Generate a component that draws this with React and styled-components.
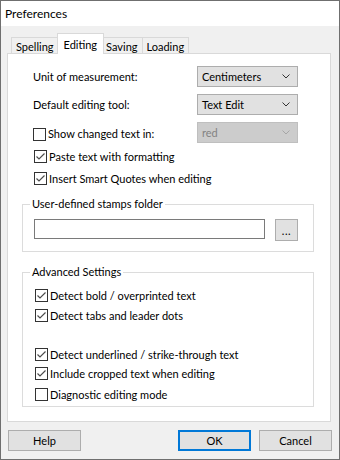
import React from "react";
import styled, { createGlobalStyle } from "styled-components";

const Global = createGlobalStyle`
  html, body { margin: 0; padding: 0; background: #fff; }
  body { font-family: Lato, "Noto Sans", sans-serif; font-size: 11px; color: #000; }
  * { box-sizing: border-box; }
`;

const Window = styled.div`
  width: 340px;
  height: 460px;
  border: 1px solid #6f6f6f;
  display: flex;
  flex-direction: column;
  background: #f0f0f0;
`;

const TitleBar = styled.div`
  height: 25px;
  background: #fff;
  padding-left: 4px;
  display: flex;
  align-items: center;
  font-size: 12px;
`;

const Body = styled.div`
  flex: 1;
  padding: 7px 8px 0 6px;
  display: flex;
  flex-direction: column;
`;

const TabStrip = styled.div`
  display: flex;
  align-items: flex-end;
  height: 21px;
  padding-left: 4px;
  position: relative;
  z-index: 1;
  margin-bottom: -1px;
`;

const Tab = styled.div`
  height: ${(p) => (p.$active ? 21 : 17)}px;
  padding: 0 ${(p) => (p.$active ? 6 : 4)}px;
  margin: 0 ${(p) => (p.$active ? -2 : 0)}px;
  background: ${(p) => (p.$active ? "#fff" : "#f0f0f0")};
  border: 1px solid #d9d9d9;
  border-bottom: ${(p) => (p.$active ? "none" : "1px solid #d9d9d9")};
  border-left: ${(p) => (p.$first || p.$active ? "1px solid #d9d9d9" : "none")};
  display: flex;
  align-items: center;
  padding-top: ${(p) => (p.$active ? 0 : 1)}px;
  position: relative;
  z-index: ${(p) => (p.$active ? 2 : 1)};
  line-height: 1;
`;

const Panel = styled.div`
  height: 369px;
  background: #fff;
  border: 1px solid #d9d9d9;
  padding: 12px 16px 0 14px;
  display: flex;
  flex-direction: column;
`;

const FormRow = styled.div`
  display: flex;
  align-items: center;
  height: 21px;
  padding-left: 11px;
  margin-top: ${(p) => p.$mt || 0}px;
`;

const Label = styled.div`
  width: 164px;
  flex: none;
  display: flex;
  align-items: center;
`;

const Select = styled.div`
  width: 101px;
  height: 21px;
  border: 1px solid ${(p) => (p.$disabled ? "#bfbfbf" : "#adadad")};
  background: ${(p) => (p.$disabled ? "#cccccc" : "#e1e1e1")};
  color: ${(p) => (p.$disabled ? "#838383" : "#000")};
  display: flex;
  align-items: center;
  justify-content: space-between;
  padding: 0 7px 0 4px;
`;

const CheckRow = styled.div`
  display: flex;
  align-items: center;
  height: 13px;
  padding-left: 12px;
  margin-top: ${(p) => p.$mt || 0}px;
`;

const Box = styled.span`
  width: 13px;
  height: 13px;
  flex: none;
  border: 1px solid #333;
  background: #fff;
  display: flex;
  align-items: center;
  justify-content: center;
  margin-right: 2px;
  margin-top: ${(p) => p.$mt || 0}px;
`;

const CheckText = styled.span`
  white-space: nowrap;
  margin-top: ${(p) => p.$mt || 0}px;
`;

const Group = styled.div`
  position: relative;
  border: 1px solid #dcdcdc;
  height: ${(p) => p.$h}px;
  margin-top: ${(p) => p.$mt}px;
  padding: ${(p) => p.$pad};
`;

const Caption = styled.span`
  position: absolute;
  top: -9px;
  left: 7px;
  padding: 0 2px;
  background: #fff;
  line-height: 16px;
`;

const PathRow = styled.div`
  display: flex;
  align-items: flex-start;
`;

const TextInput = styled.div`
  width: 231px;
  height: 20px;
  border: 1px solid #7a7a7a;
  background: #fff;
`;

const Browse = styled.div`
  width: 23px;
  height: 22px;
  margin-left: 10px;
  border: 1px solid #adadad;
  background: #e1e1e1;
  display: flex;
  align-items: flex-end;
  justify-content: center;
  padding-bottom: 4px;
  line-height: 1;
  letter-spacing: 0.5px;
`;

const GroupList = styled.div`
  display: flex;
  flex-direction: column;
`;

const ButtonRow = styled.div`
  display: flex;
  align-items: center;
  margin: 8px -1px 0 1px;
`;

const Button = styled.div`
  width: 73px;
  height: 21px;
  border: ${(p) => (p.$default ? "2px solid #0078d7" : "1px solid #adadad")};
  background: #e1e1e1;
  display: flex;
  align-items: center;
  justify-content: center;
  margin-left: ${(p) => p.$ml || 0}px;
`;

const Spacer = styled.div`
  flex: 1;
`;

const Chevron = ({ color = "#333" }) => (
  <svg width="8" height="5" viewBox="0 0 8 5">
    <polyline points="0.5,0.5 4,4 7.5,0.5" fill="none" stroke={color} strokeWidth="1" />
  </svg>
);

const Check = ({ checked, mt }) => (
  <Box $mt={mt}>
    {checked && (
      <svg width="11" height="11" viewBox="0 0 11 11">
        <polyline points="1.5,5.5 4,8 9.5,2.5" fill="none" stroke="#4d4d4d" strokeWidth="1.2" />
      </svg>
    )}
  </Box>
);

const CheckItem = ({ checked, children, mt }) => (
  <CheckRow $mt={mt}>
    <Check checked={checked} />
    <CheckText>{children}</CheckText>
  </CheckRow>
);

export default function App() {
  return (
    <>
      <Global />
      <Window>
        <TitleBar>Preferences</TitleBar>
        <Body>
          <TabStrip>
            <Tab $first>Spelling</Tab>
            <Tab $active>Editing</Tab>
            <Tab>Saving</Tab>
            <Tab>Loading</Tab>
          </TabStrip>
          <Panel>
            <FormRow>
              <Label>Unit of measurement:</Label>
              <Select>
                Centimeters
                <Chevron />
              </Select>
            </FormRow>
            <FormRow $mt={7}>
              <Label>Default editing tool:</Label>
              <Select>
                Text Edit
                <Chevron />
              </Select>
            </FormRow>
            <FormRow $mt={7}>
              <Label>
                <Check mt={3} />
                <CheckText $mt={2}>Show changed text in:</CheckText>
              </Label>
              <Select $disabled>
                red
                <Chevron color="#a6a6a6" />
              </Select>
            </FormRow>
            <CheckItem checked mt={7}>Paste text with formatting</CheckItem>
            <CheckItem checked mt={9}>Insert Smart Quotes when editing</CheckItem>

            <Group $h={48} $mt={19} $pad="14px 0 0 11px">
              <Caption>User-defined stamps folder</Caption>
              <PathRow>
                <TextInput />
                <Browse>...</Browse>
              </PathRow>
            </Group>

            <Group $h={135} $mt={20} $pad="16px 0 0 0">
              <Caption>Advanced Settings</Caption>
              <GroupList>
                <CheckItem checked>Detect bold / overprinted text</CheckItem>
                <CheckItem checked mt={7}>Detect tabs and leader dots</CheckItem>
                <CheckItem checked mt={26}>Detect underlined / strike-through text</CheckItem>
                <CheckItem checked mt={6}>Include cropped text when editing</CheckItem>
                <CheckItem mt={8}>Diagnostic editing mode</CheckItem>
              </GroupList>
            </Group>
          </Panel>
          <ButtonRow>
            <Button>Help</Button>
            <Spacer />
            <Button $default>OK</Button>
            <Button $ml={8}>Cancel</Button>
          </ButtonRow>
        </Body>
      </Window>
    </>
  );
}
